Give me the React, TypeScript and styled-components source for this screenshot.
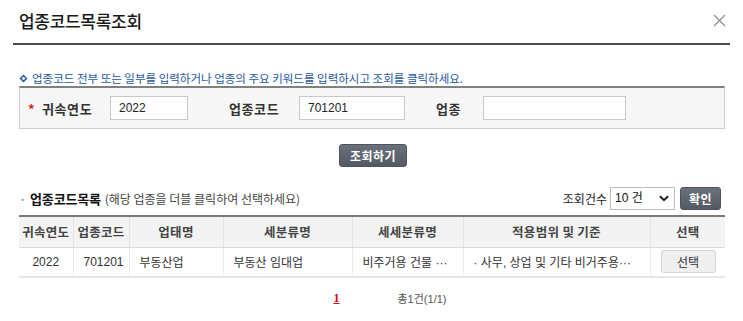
import styled, { createGlobalStyle } from "styled-components";

const GlobalStyle = createGlobalStyle`
  html, body {
    margin: 0;
    padding: 0;
    background: #ffffff;
  }
  body {
    font-family: "Liberation Sans", "Noto Sans CJK KR", sans-serif;
    color: #333333;
  }
  * {
    box-sizing: border-box;
  }
`;

interface Row {
  year: string;
  code: string;
  bizType: string;
  subClass: string;
  detailClass: string;
  scope: string;
}

const rows: Row[] = [
  {
    year: "2022",
    code: "701201",
    bizType: "부동산업",
    subClass: "부동산 임대업",
    detailClass: "비주거용 건물 ···",
    scope: "· 사무, 상업 및 기타 비거주용···",
  },
];

const columns = [
  { title: "귀속연도", width: 54 },
  { title: "업종코드", width: 56 },
  { title: "업태명", width: 94 },
  { title: "세분류명", width: 129 },
  { title: "세세분류명", width: 111 },
  { title: "적용범위 및 기준", width: 187 },
  { title: "선택", width: 75 },
];

export default function App() {
  return (
    <>
      <GlobalStyle />
      <Popup>
        <Header>
          <Title>업종코드목록조회</Title>
          <CloseButton aria-label="닫기">
            <svg width="13" height="13" viewBox="0 0 13 13">
              <path d="M1 1L12 12M12 1L1 12" stroke="#8a8a8a" strokeWidth="1.1" />
            </svg>
          </CloseButton>
        </Header>

        <Body>
          <Notice>
            <svg width="9" height="9" viewBox="0 0 9 9">
              <path d="M4.5 0.5L8.5 4.5L4.5 8.5L0.5 4.5Z" fill="#2a5fa8" />
              <circle cx="4.5" cy="4.5" r="1.4" fill="#ffffff" />
            </svg>
            업종코드 전부 또는 일부를 입력하거나 업종의 주요 키워드를 입력하시고 조회를 클릭하세요.
          </Notice>

          <SearchBox>
            <FieldLabel $width={82}>
              <Required>*</Required>귀속연도
            </FieldLabel>
            <TextInput $width={78} defaultValue="2022" />
            <FieldLabel $width={70} $gap={41}>
              업종코드
            </FieldLabel>
            <TextInput $width={106} defaultValue="701201" />
            <FieldLabel $width={47} $gap={31}>
              업종
            </FieldLabel>
            <TextInput $width={143} defaultValue="" />
          </SearchBox>

          <ButtonRow>
            <DarkButton $width={68}>조회하기</DarkButton>
          </ButtonRow>

          <ListBar>
            <ListTitle>
              <Dot>·</Dot>
              <strong>업종코드목록</strong>
              <span>(해당 업종을 더블 클릭하여 선택하세요)</span>
            </ListTitle>
            <ListTools>
              <ToolLabel>조회건수</ToolLabel>
              <SelectWrap>
                <CountSelect defaultValue="10">
                  <option value="10">10 건</option>
                  <option value="20">20 건</option>
                  <option value="50">50 건</option>
                </CountSelect>
                <Chevron width="10" height="7" viewBox="0 0 10 7">
                  <path d="M1 1.2L5 5.2L9 1.2" stroke="#222" strokeWidth="2" fill="none" />
                </Chevron>
              </SelectWrap>
              <DarkButton $width={41}>확인</DarkButton>
            </ListTools>
          </ListBar>

          <Table>
            <colgroup>
              {columns.map((c) => (
                <col key={c.title} style={{ width: c.width }} />
              ))}
            </colgroup>
            <thead>
              <tr>
                {columns.map((c) => (
                  <Th key={c.title}>{c.title}</Th>
                ))}
              </tr>
            </thead>
            <tbody>
              {rows.map((r) => (
                <tr key={r.code}>
                  <Td $align="center">{r.year}</Td>
                  <Td $align="center">{r.code}</Td>
                  <Td>{r.bizType}</Td>
                  <Td>{r.subClass}</Td>
                  <Td>{r.detailClass}</Td>
                  <Td>{r.scope}</Td>
                  <Td $align="center">
                    <PickButton>선택</PickButton>
                  </Td>
                </tr>
              ))}
            </tbody>
          </Table>

          <Paging>
            <CurrentPage>1</CurrentPage>
            <PageInfo>총1건(1/1)</PageInfo>
          </Paging>
        </Body>
      </Popup>
    </>
  );
}

const Popup = styled.div`
  width: 743px;
  height: 321px;
  background: #ffffff;
  overflow: hidden;
`;

const Header = styled.div`
  display: flex;
  align-items: center;
  justify-content: space-between;
  height: 45px;
  margin: 0 13px;
  padding: 0 4px 2px 6px;
  border-bottom: 2px solid #4a4a4a;
`;

const Title = styled.h1`
  margin: 0;
  font-family: "Noto Sans CJK KR", sans-serif;
  font-size: 17px;
  font-weight: 500;
  letter-spacing: -0.3px;
  color: #1a1a1a;
`;

const CloseButton = styled.button`
  display: flex;
  padding: 0;
  border: 0;
  background: none;
  cursor: pointer;
`;

const Body = styled.div`
  padding: 0 18px 0 19px;
`;

const Notice = styled.p`
  display: flex;
  align-items: center;
  gap: 4px;
  height: 16px;
  margin: 25px 0 0;
  font-family: "Noto Sans CJK KR", sans-serif;
  font-size: 11.5px;
  letter-spacing: 0;
  color: #2458a0;
`;

const SearchBox = styled.div`
  display: flex;
  align-items: center;
  height: 43px;
  padding: 0 8px;
  border: 1px solid #cfcfcf;
  border-top: 2px solid #808080;
  background: #f7f7f7;
`;

const FieldLabel = styled.label<{ $width: number; $gap?: number }>`
  display: flex;
  align-items: center;
  width: ${({ $width }) => $width}px;
  margin-left: ${({ $gap }) => $gap ?? 0}px;
  flex-shrink: 0;
  white-space: nowrap;
  font-family: "Noto Sans CJK KR", sans-serif;
  font-size: 13px;
  font-weight: 700;
  letter-spacing: 0.6px;
  color: #333333;
`;

const Required = styled.span`
  width: 14px;
  color: #d8202a;
  font-size: 13px;
`;

const TextInput = styled.input<{ $width: number }>`
  width: ${({ $width }) => $width}px;
  height: 24px;
  padding: 0 8px;
  flex-shrink: 0;
  border: 1px solid #c9c9c9;
  background: #ffffff;
  font-family: "Liberation Sans", sans-serif;
  font-size: 12px;
  color: #222222;
  outline: none;
`;

const ButtonRow = styled.div`
  display: flex;
  justify-content: center;
  padding: 15px 0 0 2px;
`;

const DarkButton = styled.button<{ $width: number }>`
  width: ${({ $width }) => $width}px;
  height: 23px;
  padding: 0;
  border: 1px solid #4e535c;
  border-radius: 3px;
  background: linear-gradient(#6b717b, #545a64);
  font-family: "Noto Sans CJK KR", sans-serif;
  font-size: 12px;
  font-weight: 700;
  letter-spacing: 0.5px;
  color: #ffffff;
  cursor: pointer;
`;

const ListBar = styled.div`
  display: flex;
  align-items: center;
  justify-content: space-between;
  margin-top: 19px;
  height: 24px;
  padding-right: 4px;
`;

const ListTitle = styled.div`
  display: flex;
  align-items: center;
  gap: 4px;
  font-family: "Noto Sans CJK KR", sans-serif;
  font-size: 12px;
  color: #444444;

  strong {
    font-size: 13px;
    font-weight: 700;
    color: #111111;
    letter-spacing: -0.2px;
  }
`;

const Dot = styled.span`
  color: #999999;
  font-weight: 700;
`;

const ListTools = styled.div`
  display: flex;
  align-items: center;
  gap: 5px;
`;

const ToolLabel = styled.span`
  margin-right: -2px;
  font-family: "Noto Sans CJK KR", sans-serif;
  font-size: 12px;
  color: #222222;
`;

const SelectWrap = styled.div`
  position: relative;
  width: 65px;
  height: 23px;
`;

const CountSelect = styled.select`
  appearance: none;
  width: 100%;
  height: 100%;
  padding: 0 0 0 4px;
  border: 1px solid #bdbdbd;
  border-radius: 0;
  background: #ffffff;
  font-family: "Liberation Sans", "Noto Sans CJK KR", sans-serif;
  font-size: 12px;
  color: #111111;
  outline: none;
`;

const Chevron = styled.svg`
  position: absolute;
  top: 8px;
  right: 6px;
  pointer-events: none;
`;

const Table = styled.table`
  width: 706px;
  margin-top: 5px;
  border-collapse: collapse;
  table-layout: fixed;
  border-top: 2px solid #7a7a7a;
  border-bottom: 2px solid #e6e6e6;
`;

const Th = styled.th`
  height: 31px;
  padding: 0;
  border-left: 1px solid #e3e3e3;
  border-bottom: 1px solid #d9d9d9;
  background: #f3f3f3;
  font-family: "Noto Sans CJK KR", sans-serif;
  font-size: 12.5px;
  font-weight: 700;
  letter-spacing: 0.3px;
  color: #444444;

  &:first-child {
    border-left: 0;
  }
`;

const Td = styled.td<{ $align?: "left" | "center" }>`
  height: 30px;
  padding: 0 10px;
  border-left: 1px solid #ececec;
  text-align: ${({ $align }) => $align ?? "left"};
  white-space: nowrap;
  font-family: "Liberation Sans", "Noto Sans CJK KR", sans-serif;
  font-size: 12px;
  color: #333333;

  &:first-child {
    border-left: 0;
  }
`;

const PickButton = styled.button`
  width: 55px;
  height: 23px;
  padding: 0;
  border: 1px solid #d6d6d6;
  border-radius: 3px;
  background: #efefef;
  font-family: "Noto Sans CJK KR", sans-serif;
  font-size: 12px;
  color: #333333;
  cursor: pointer;
`;

const Paging = styled.div`
  display: flex;
  align-items: center;
  justify-content: center;
  gap: 58px;
  padding: 12px 0 0 36px;
`;

const CurrentPage = styled.a`
  font-family: "Liberation Serif", serif;
  font-size: 12px;
  font-weight: 700;
  color: #e2001a;
  text-decoration: underline;
`;

const PageInfo = styled.span`
  font-family: "Liberation Sans", "Noto Sans CJK KR", sans-serif;
  font-size: 11px;
  color: #555555;
`;
